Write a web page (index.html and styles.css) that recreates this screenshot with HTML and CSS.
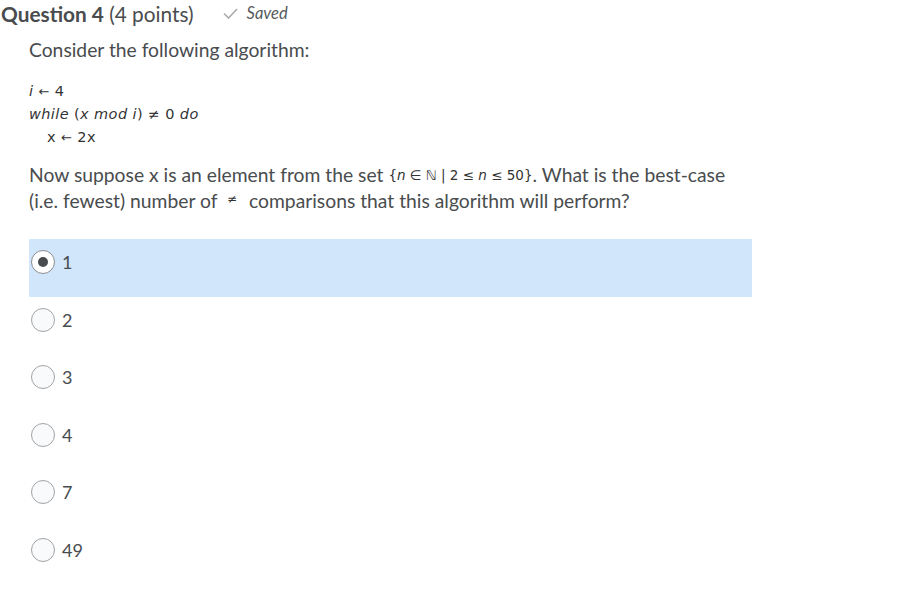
FILE: index.html
```html
<!DOCTYPE html>
<html lang="en">
<head>
    <meta charset="UTF-8">
    <title>Question 4</title>
    <link rel="stylesheet" href="styles.css">
</head>
<body>

    <!-- Question header -->
    <div class="q-header">
        <h2 class="q-title"><strong>Question 4</strong> (4 points)</h2>
        <span class="q-saved">
            <svg class="check" width="15" height="11" viewBox="0 0 15 11">
                <path d="M1 5.5 L5.5 10 L14 1" fill="none" stroke="#a8abad" stroke-width="1.6"/>
            </svg>
            Saved
        </span>
    </div>

    <div class="q-body">
        <p class="q-text">Consider the following algorithm:</p>

        <div class="algo">
            <div><i>i</i> <span class="arr">&larr;</span> 4</div>
            <div><i>while</i> (<i>x mod i</i>) <span class="ne">&ne;</span> 0 <i>do</i></div>
            <div class="indent">x <span class="arr">&larr;</span> 2x</div>
        </div>

        <p class="q-text q-para">
            Now suppose x is an element from the set <span class="math">{<i>n</i> &isin; &#8469; | 2 &le; <i>n</i> &le; 50}</span>. What is the best-case
            (i.e. fewest) number of <span class="math ne-op">&ne;</span> comparisons that this algorithm will perform?
        </p>

        <!-- Answer choices -->
        <div class="choices">
            <label class="choice selected"><span class="radio"></span>1</label>
            <label class="choice"><span class="radio"></span>2</label>
            <label class="choice"><span class="radio"></span>3</label>
            <label class="choice"><span class="radio"></span>4</label>
            <label class="choice"><span class="radio"></span>7</label>
            <label class="choice"><span class="radio"></span>49</label>
        </div>
    </div>

</body>
</html>
```

FILE: styles.css
```css
body {
    margin: 0;
    font-family: Lato, "Open Sans", sans-serif;
    color: #494c4e;
    background: #fff;
}
.q-header {
    display: flex;
    align-items: center;
    padding: 2px 0 0 1px;
    height: 22px;
}
.q-title {
    margin: 0;
    font-size: 20.8px;
    font-weight: normal;
}
.q-title strong {
    font-weight: bold;
}
.q-saved {
    display: flex;
    align-items: center;
    margin-left: 29px;
    font-size: 16.5px;
    font-style: italic;
    color: #565a5c;
}
.q-saved .check {
    margin-right: 9px;
}
.q-body {
    padding-left: 29px;
}
.q-text {
    margin: 13px 0 0;
    font-size: 19.3px;
    line-height: 26px;
}
.q-para {
    max-width: 705px;
    margin-top: 13px;
}
.algo {
    margin-top: 17px;
    font-family: "DejaVu Sans", sans-serif;
    font-size: 14.5px;
    letter-spacing: 0.4px;
    line-height: 23px;
    color: #333;
}
.algo .indent {
    padding-left: 18px;
}
.arr {
    font-size: 13px;
}
.ne {
    font-size: 14px;
}
.math {
    font-family: "DejaVu Sans", sans-serif;
    font-size: 13.5px;
    line-height: 1;
    color: #333;
    vertical-align: 2px;
}
.ne-op {
    font-size: 12px;
    vertical-align: 5px;
    padding: 0 7px 0 5px;
}
.choices {
    margin-top: 25px;
    width: 723px;
}
.choice {
    box-sizing: border-box;
    display: flex;
    align-items: center;
    height: 57.5px;
    padding: 0 0 11px 2px;
    font-size: 18px;
}
.choice.selected {
    background-color: #d1e6fa;
}
.radio {
    box-sizing: border-box;
    width: 24px;
    height: 24px;
    margin-right: 7px;
    border: 1px solid #a0a3a5;
    border-radius: 50%;
    background: #f9fafc;
    position: relative;
}
.choice.selected .radio {
    background: #fff;
    border-color: #8a8d90;
}
.choice.selected .radio::after {
    content: "";
    position: absolute;
    left: 6px;
    top: 6px;
    width: 10px;
    height: 10px;
    border-radius: 50%;
    background: #494c4e;
}
```
